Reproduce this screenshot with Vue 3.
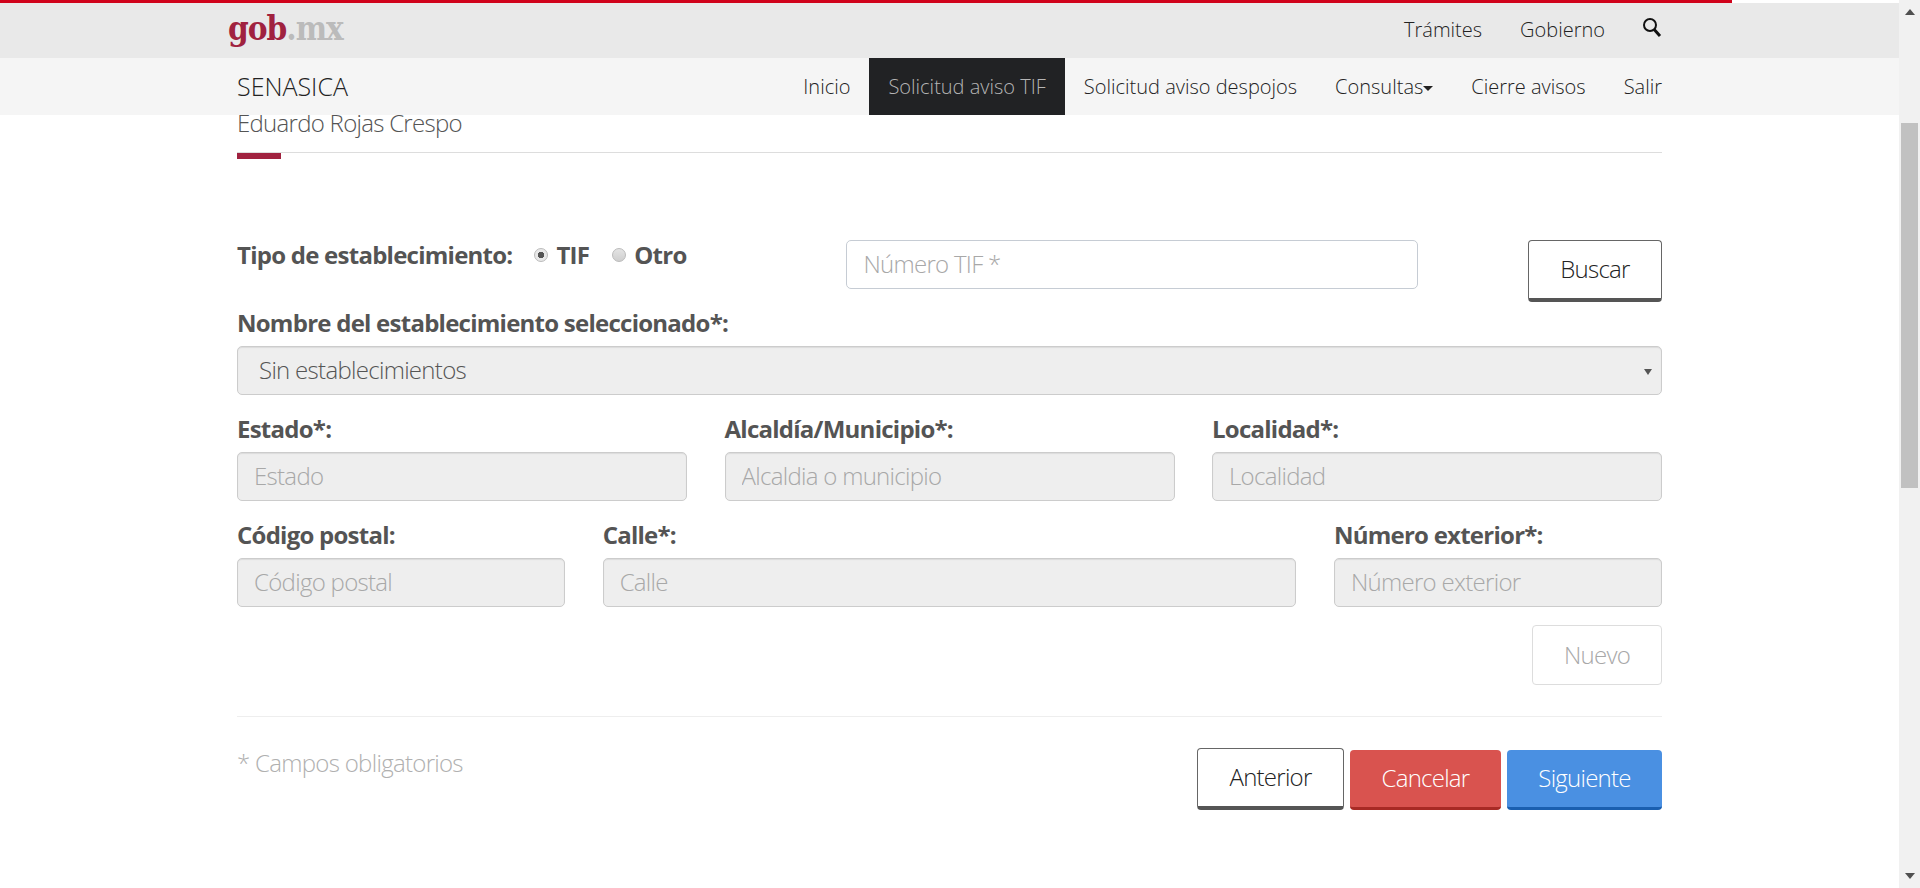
<template>
  <div class="page">
    <div class="viewport">
      <header class="site-header">
        <div class="red-line"></div>
        <div class="gob-bar">
          <a class="gob-logo">gob<span class="logo-mx">.mx</span></a>
          <nav class="gob-links">
            <a>Trámites</a>
            <a>Gobierno</a>
            <svg class="search-icon" viewBox="0 0 20 20" width="20" height="20">
              <circle cx="8" cy="8" r="6" fill="none" stroke="#111" stroke-width="2" />
              <path d="M12.2 12.6 L18 19" fill="none" stroke="#111" stroke-width="3" />
            </svg>
          </nav>
        </div>
        <div class="main-nav">
          <span class="brand">SENASICA</span>
          <nav class="nav-items">
            <a v-for="item in navItems" :key="item.text" class="nav-item" :class="{ active: item.active }">
              {{ item.text }}<i v-if="item.caret" class="caret"></i>
            </a>
          </nav>
        </div>
      </header>

      <main class="content">
        <h2 class="user-name">Eduardo Rojas Crespo</h2>
        <div class="title-rule"><span class="rule-accent"></span></div>

        <form class="form-grid" @submit.prevent>
          <div class="type-field">
            <span class="field-label">Tipo de establecimiento:</span>
            <label class="radio-option"><input type="radio" name="tipo" checked />TIF</label>
            <label class="radio-option"><input type="radio" name="tipo" />Otro</label>
          </div>
          <input class="text-input tif-input" type="text" placeholder="Número TIF *" />
          <div class="search-cell">
            <button class="btn btn-outline btn-search" type="button">Buscar</button>
          </div>

          <div class="field span-12">
            <label class="field-label">Nombre del establecimiento seleccionado*:</label>
            <div class="select-wrap">
              <select class="text-input select-input" disabled>
                <option>Sin establecimientos</option>
              </select>
            </div>
          </div>

          <div v-for="field in fields" :key="field.label" class="field" :class="field.span">
            <label class="field-label">{{ field.label }}</label>
            <input class="text-input" type="text" disabled :placeholder="field.placeholder" />
          </div>

          <div class="new-cell">
            <button class="btn btn-disabled" type="button">Nuevo</button>
          </div>
        </form>

        <hr class="divider" />

        <div class="form-footer">
          <p class="required-note">* Campos obligatorios</p>
          <div class="footer-actions">
            <button class="btn btn-outline btn-prev" type="button">Anterior</button>
            <button class="btn btn-danger" type="button">Cancelar</button>
            <button class="btn btn-primary" type="button">Siguiente</button>
          </div>
        </div>
      </main>
    </div>

    <div class="scrollbar">
      <span class="arrow arrow-up"></span>
      <div class="track"><div class="thumb"></div></div>
      <span class="arrow arrow-down"></span>
    </div>
  </div>
</template>

<script setup>
const navItems = [
  { text: 'Inicio' },
  { text: 'Solicitud aviso TIF', active: true },
  { text: 'Solicitud aviso despojos' },
  { text: 'Consultas', caret: true },
  { text: 'Cierre avisos' },
  { text: 'Salir' }
]

const fields = [
  { label: 'Estado*:', placeholder: 'Estado', span: 'span-4' },
  { label: 'Alcaldía/Municipio*:', placeholder: 'Alcaldia o municipio', span: 'span-4' },
  { label: 'Localidad*:', placeholder: 'Localidad', span: 'span-4' },
  { label: 'Código postal:', placeholder: 'Código postal', span: 'span-3' },
  { label: 'Calle*:', placeholder: 'Calle', span: 'span-6' },
  { label: 'Número exterior*:', placeholder: 'Número exterior', span: 'span-3' }
]
</script>

<style>
html,
body {
  margin: 0;
  height: 888px;
  overflow: hidden;
  background: #fff;
}
</style>

<style scoped>
* {
  box-sizing: border-box;
}

.page {
  display: flex;
  height: 888px;
  font-family: "Open Sans", "Noto Sans", sans-serif;
  font-weight: 300;
  color: #333;
}

.viewport {
  position: relative;
  flex: 1;
  min-width: 0;
  overflow: hidden;
}

.site-header {
  position: absolute;
  top: 0;
  left: 0;
  right: 0;
  z-index: 2;
}

.red-line {
  width: 1732px;
  height: 3px;
  background: #d0021b;
}

.gob-bar {
  display: flex;
  justify-content: space-between;
  align-items: center;
  height: 55px;
  padding: 0 237px 0 228px;
  background: #e9e9e9;
}

.gob-logo {
  margin-top: -5px;
  font-family: "DejaVu Serif", serif;
  font-size: 33px;
  font-weight: 700;
  font-stretch: condensed;
  letter-spacing: -1px;
  color: #a0223f;
}

.logo-mx {
  color: #bbb;
}

.gob-links {
  display: flex;
  align-items: center;
  gap: 38px;
  margin-top: -3px;
  font-size: 20px;
  color: #222;
}

.search-icon {
  margin-top: -4px;
  margin-left: -1px;
}

.main-nav {
  display: flex;
  justify-content: space-between;
  height: 57px;
  padding: 0 237px;
  background: #f5f5f5;
}

.brand {
  align-self: center;
  margin-top: -2px;
  font-size: 25px;
  color: #222;
}

.nav-items {
  display: flex;
  margin-right: -19px;
}

.nav-item {
  display: flex;
  align-items: center;
  padding: 0 19px;
  font-size: 20px;
  color: #222;
}

.nav-item.active {
  background: #212224;
  color: #b5b5b5;
}

.caret {
  width: 0;
  height: 0;
  margin: 3px 0 0 0;
  border: 5px solid transparent;
  border-top-color: #222;
  border-bottom: 0;
}

.content {
  width: 1425px;
  margin-left: 237px;
  padding-top: 108px;
}

.user-name {
  margin: 0;
  font-size: 24px;
  letter-spacing: -0.72px;
  font-weight: 300;
  line-height: 30px;
  color: #545454;
}

.title-rule {
  height: 1px;
  margin-top: 14px;
  background: #ddd;
}

.rule-accent {
  display: block;
  position: relative;
  top: 1px;
  width: 44px;
  height: 6px;
  background: #a0223f;
}

.form-grid {
  display: grid;
  grid-template-columns: repeat(12, 1fr);
  column-gap: 37.5px;
  margin-top: 87px;
}

.type-field {
  grid-column: span 5;
  display: flex;
  align-items: center;
  align-self: start;
  height: 32px;
}

.field-label {
  display: block;
  height: 28px;
  font-size: 24px;
  letter-spacing: -0.75px;
  font-weight: 700;
  line-height: 26px;
  color: #545454;
}

.type-field .field-label {
  margin-right: 22px;
}

.radio-option {
  display: flex;
  align-items: center;
  margin-right: 23px;
  font-size: 24px;
  letter-spacing: -0.75px;
  font-weight: 700;
  line-height: 26px;
  padding-bottom: 2px;
  color: #545454;
}

.radio-option input {
  appearance: none;
  width: 14px;
  height: 14px;
  margin: 0 8px 0 0;
  border: 1px solid #bbb;
  border-radius: 50%;
  background: linear-gradient(#e4e4e4, #cfcfcf);
}

.radio-option input:checked {
  background: radial-gradient(circle, #555 0 3px, #e8e8e8 3.5px);
}

.text-input {
  display: block;
  width: 100%;
  height: 49px;
  padding: 0 16px 2px;
  border: 1px solid #ccc;
  border-radius: 5px;
  font-family: inherit;
  font-size: 24px;
  letter-spacing: -0.7px;
  font-weight: 300;
  color: #555;
  background: #fff;
  outline: none;
}

.text-input::placeholder {
  color: #a8a8a8;
  opacity: 1;
}

.text-input:disabled {
  background: #eee;
  box-shadow: inset 0 1px 1px rgba(0, 0, 0, 0.08);
}

.tif-input {
  grid-column: span 5;
  border-color: #c6ccd4;
}

.search-cell {
  grid-column: span 2;
  display: flex;
  justify-content: flex-end;
  margin-bottom: 8px;
}

.field {
  margin-bottom: 21px;
}

.field .field-label {
  margin-bottom: 8px;
}

.span-12 { grid-column: span 12; }
.span-6 { grid-column: span 6; }
.span-4 { grid-column: span 4; }
.span-3 { grid-column: span 3; }

.select-wrap {
  position: relative;
}

.select-wrap::after {
  content: "";
  position: absolute;
  top: 23px;
  right: 10px;
  border: 4px solid transparent;
  border-top: 6px solid #555;
  border-bottom: 0;
}

.select-input {
  appearance: none;
  padding-left: 21px;
  opacity: 1;
}

.new-cell {
  grid-column: span 12;
  display: flex;
  justify-content: flex-end;
  margin-top: -3px;
}

.btn {
  height: 60px;
  padding: 0 0 2px;
  border: 1px solid transparent;
  border-radius: 4px;
  font-family: inherit;
  font-size: 24px;
  letter-spacing: -0.75px;
  font-weight: 300;
  background: #fff;
}

.btn-outline {
  height: 62px;
  border: 1px solid #666;
  border-bottom: 4px solid #555;
  color: #222;
}

.btn-search {
  width: 134px;
}

.btn-disabled {
  width: 130px;
  border-color: #ddd;
  color: #a8a8a8;
}

.divider {
  height: 1px;
  margin: 31px 0;
  border: 0;
  background: #eee;
}

.form-footer {
  display: flex;
  justify-content: space-between;
  align-items: flex-start;
}

.required-note {
  margin: 0;
  font-size: 24px;
  letter-spacing: -0.7px;
  line-height: 30px;
  color: #b0b0b0;
}

.footer-actions {
  display: flex;
  align-items: flex-end;
  gap: 6px;
}

.btn-prev {
  width: 147px;
}

.btn-danger {
  width: 151px;
  border: 0;
  border-bottom: 3px solid #a82a25;
  background: #d9534f;
  color: #fff;
}

.btn-primary {
  width: 155px;
  border: 0;
  border-bottom: 3px solid #1a5fb0;
  background: #4a90e2;
  color: #fff;
}

.scrollbar {
  display: flex;
  flex-direction: column;
  align-items: center;
  width: 21px;
  height: 888px;
  background: #f1f1f1;
}

.arrow {
  flex: none;
  width: 0;
  height: 0;
  margin: 9px 0;
  border-left: 5px solid transparent;
  border-right: 5px solid transparent;
}

.arrow-up {
  border-bottom: 6px solid #505050;
}

.arrow-down {
  border-top: 6px solid #505050;
}

.track {
  flex: 1;
  width: 100%;
  padding: 99px 2px 0;
}

.thumb {
  height: 365px;
  background: #c1c1c1;
}
</style>
